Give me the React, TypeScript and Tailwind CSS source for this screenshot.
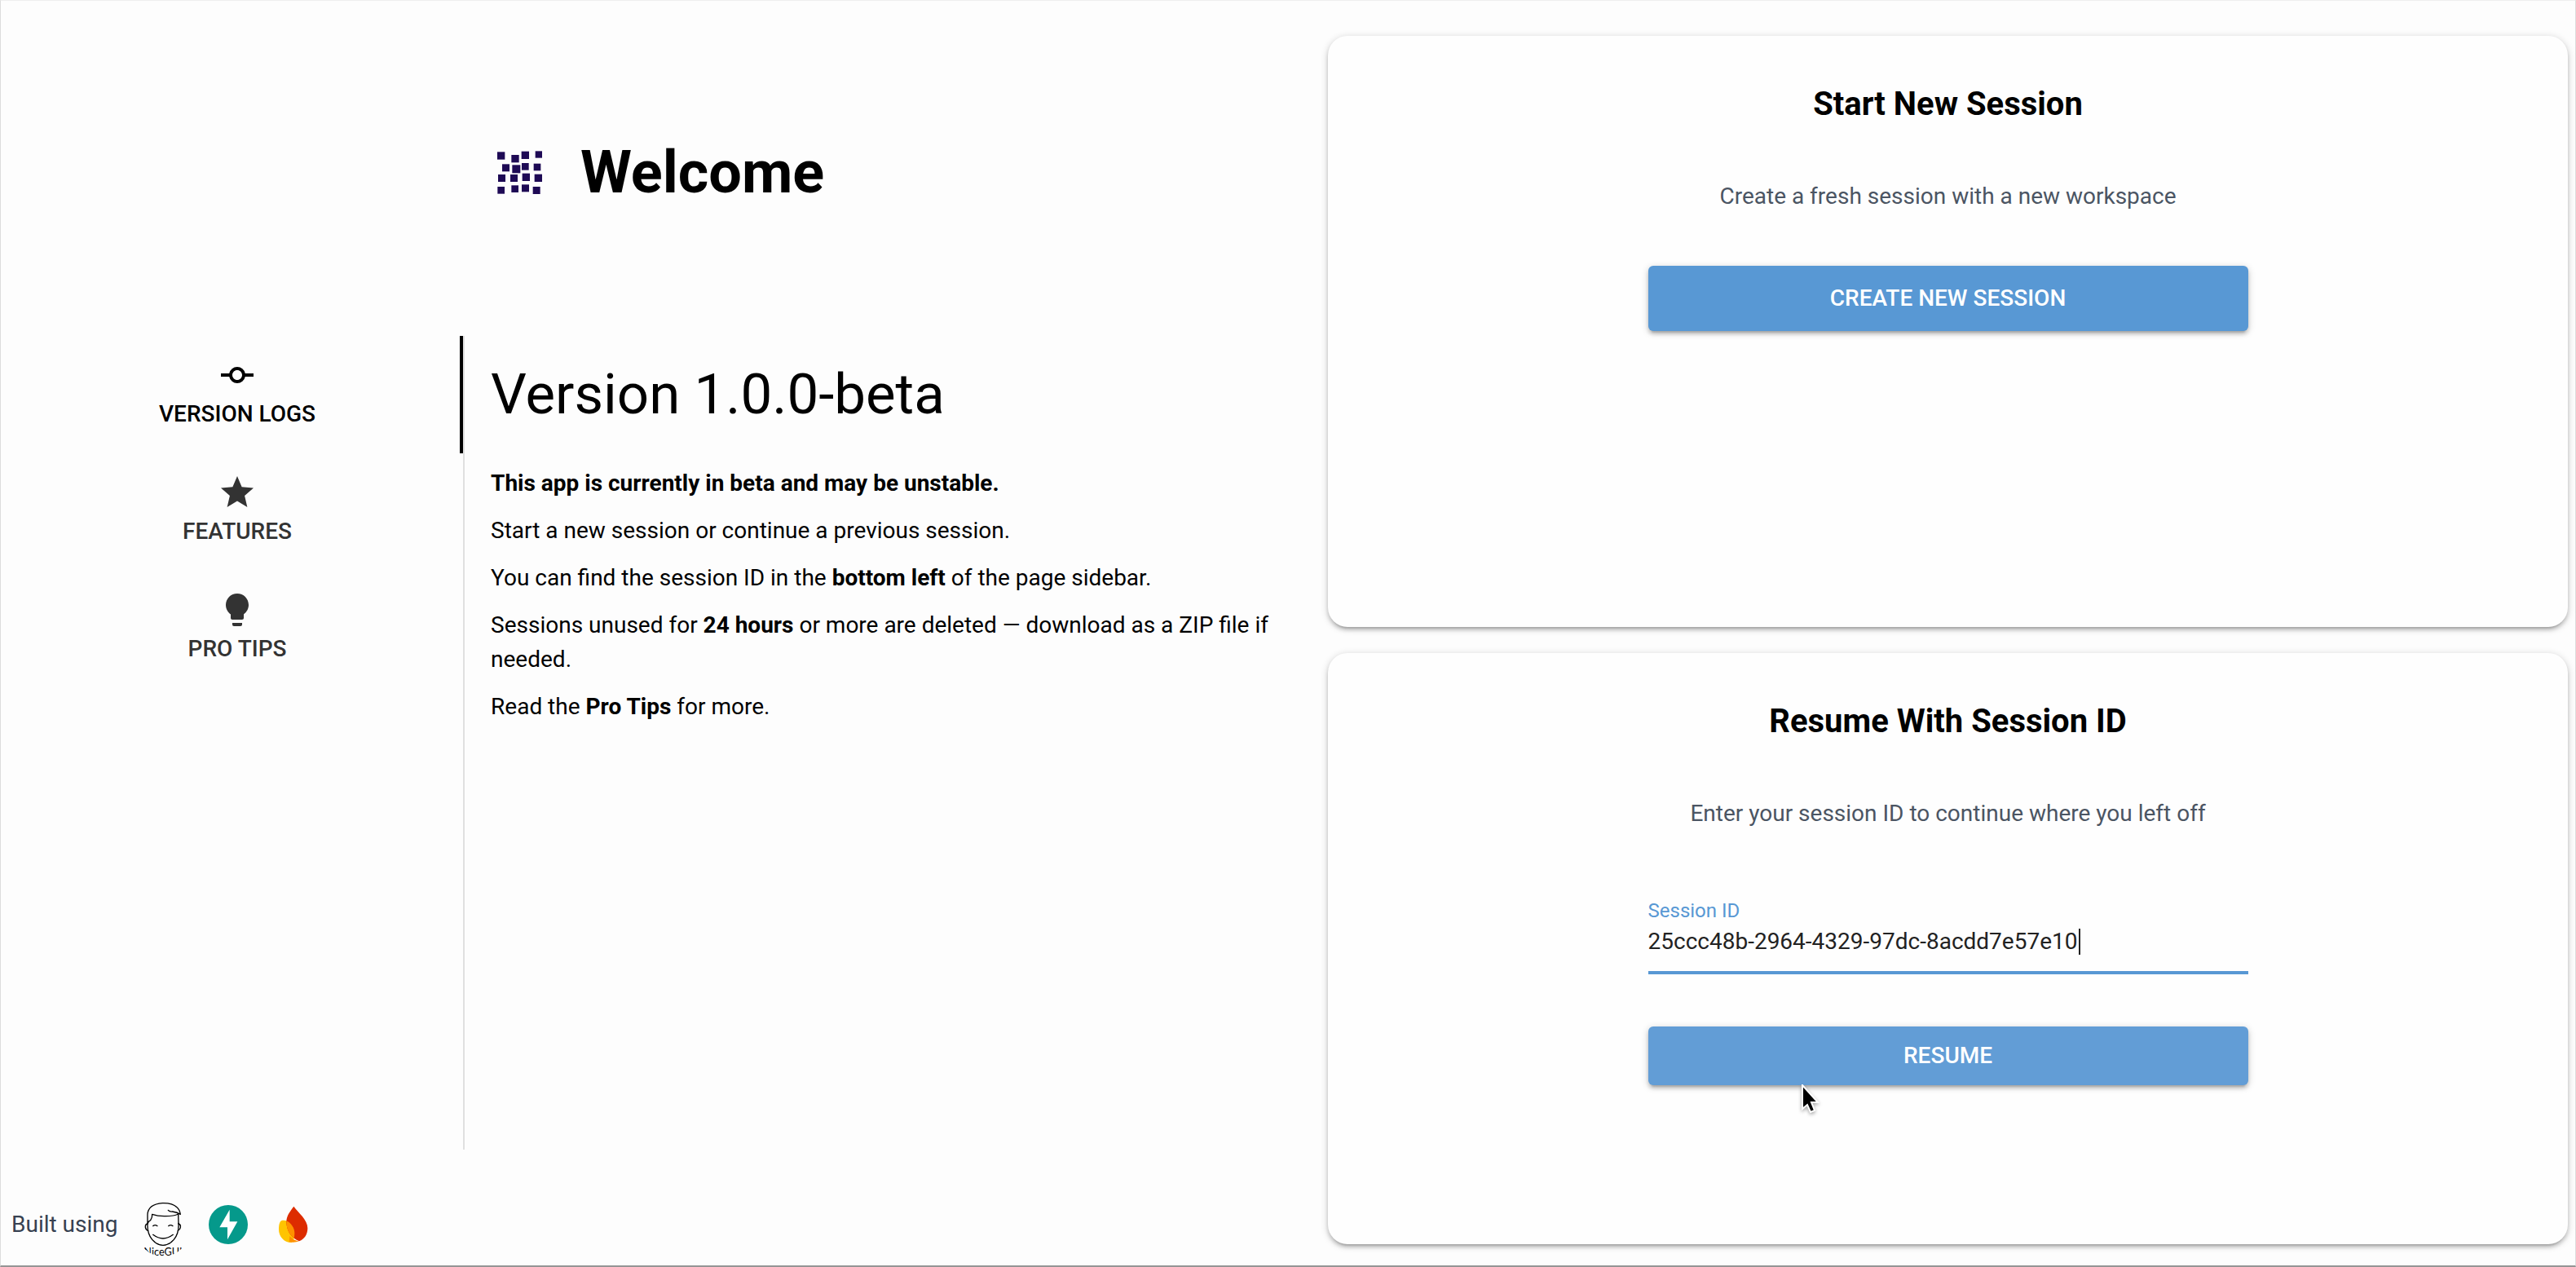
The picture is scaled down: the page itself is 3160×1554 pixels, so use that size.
import { useState, type ReactNode } from "react";
import { MdCommit, MdLightbulb, MdStar } from "react-icons/md";

const logoSquares = [
  [153, 139, 28], [205, 150, 28], [242, 137, 28], [293, 136, 25],
  [171, 184, 27], [208, 187, 30], [243, 180, 26], [287, 182, 26],
  [156, 222, 27], [201, 222, 27], [245, 218, 28], [290, 221, 28],
  [154, 267, 26], [205, 262, 26], [243, 259, 27], [284, 267, 27],
];

function Logo() {
  return (
    <svg viewBox="123 96 240 240" className="size-20 shrink-0" aria-hidden="true">
      {logoSquares.map(([x, y, s]) => (
        <rect key={`${x}-${y}`} x={x} y={y} width={s} height={s} fill="#1e0a55" />
      ))}
    </svg>
  );
}

function NiceGuiIcon() {
  return (
    <svg viewBox="504 87 192 192" className="size-16 overflow-visible" fill="none" stroke="#000" strokeWidth="4" strokeLinecap="round" strokeLinejoin="round" aria-hidden="true">
      <defs>
        <clipPath id="nice-clip">
          <circle cx="600" cy="203" r="97" />
        </clipPath>
      </defs>
      <path d="M543 180 V146 Q545 108 598 104 Q634 103 651 119 Q661 127 664 145 Q652 138 634 135 Q624 136 619 130 M543 180 Q546 170 554 167 Q561 157 560 145 Q582 153 610 152 Q640 152 656 144 L657 180" />
      <path d="M543 180 Q534 181 535 193 Q537 203 545 205 M657 180 Q666 182 664 194 Q662 203 655 205" />
      <path d="M543 178 Q541 215 560 238 Q578 259 600 259 Q623 258 640 238 Q659 215 657 178" />
      <path d="M563 188 Q571 182 579 188 M620 188 Q628 182 636 188 M563 220 Q600 248 637 220" />
      <g clipPath="url(#nice-clip)">
        <text x="600" y="297" textAnchor="middle" fill="#000" stroke="none" fontSize="38" fontFamily="Lato, sans-serif">NiceGUI</text>
      </g>
    </svg>
  );
}

function FastApiIcon() {
  return (
    <svg viewBox="744 87 192 192" className="size-16" aria-hidden="true">
      <circle cx="840" cy="183" r="72" fill="#05998b" />
      <path d="M845 128 L808 193 H837 V238 L874 172 H845 Z" fill="#fff" />
    </svg>
  );
}

const drop = "M1081 116 C1065 138 1055 150 1054 172 C1054 205 1070 232 1101 244 C1121 237 1132 218 1132 196 C1132 164 1098 140 1081 116 Z";
const blob = "M1040 167 C1062 165 1084 190 1084 214 C1084 228 1082 238 1074 249 C1045 250 1026 226 1026 200 C1026 180 1030 168 1040 167 Z";

function FlameIcon() {
  return (
    <svg viewBox="984 87 192 192" className="size-16" aria-hidden="true">
      <defs>
        <clipPath id="flame-drop">
          <path d={drop} />
        </clipPath>
      </defs>
      <path d={blob} fill="#ffc400" />
      <path d="M1066 225 Q1082 242 1101 244 Q1085 251 1064 247 Z" fill="#ff9100" />
      <path d={drop} fill="#dd2c00" />
      <path d={blob} fill="#ff9100" clipPath="url(#flame-drop)" />
    </svg>
  );
}

function Pointer() {
  return (
    <svg viewBox="0 0 24 38" className="pointer-events-none absolute top-[71px] left-[188px] h-[38px] w-6 drop-shadow-[0_2px_2px_rgba(0,0,0,0.35)]" aria-hidden="true">
      <path d="M1 1 V30 L7 25 L11 34 L16 32 L12 22 H20 Z" fill="#000" stroke="#fff" strokeWidth="2" />
    </svg>
  );
}

function Card({ title, subtitle, children }: { title: string; subtitle: string; children: ReactNode }) {
  return (
    <section className="flex flex-1 flex-col items-center rounded-[24px] bg-[#fefefe] px-8 pt-13 shadow-[0_2px_10px_rgba(0,0,0,0.2),0_4px_4px_rgba(0,0,0,0.14),0_6px_2px_-4px_rgba(0,0,0,0.12)]">
      <h2 className="text-[40px] leading-[64px] font-bold text-black">{title}</h2>
      <p className="mt-15 text-[28px] leading-[42px] text-[#4b5563]">{subtitle}</p>
      <div className="mt-16 w-full max-w-[736px]">{children}</div>
    </section>
  );
}

const buttonStyle =
  "rounded-[6px] text-[28px] font-medium text-white uppercase shadow-[0_2px_10px_rgba(0,0,0,0.2),0_4px_4px_rgba(0,0,0,0.14),0_6px_2px_-4px_rgba(0,0,0,0.12)]";

const tabs = [
  { label: "Version Logs", Icon: MdCommit },
  { label: "Features", Icon: MdStar },
  { label: "Pro Tips", Icon: MdLightbulb },
];

export default function App() {
  const [active, setActive] = useState(0);
  const [sessionId, setSessionId] = useState("25ccc48b-2964-4329-97dc-8acdd7e57e10");

  return (
    <div className="grid min-h-screen grid-cols-[51fr_49fr] gap-x-8 border-t border-r border-b-2 border-l border-t-[#efefef] border-r-[#dcdcdc] border-b-[#959595] border-l-[#dcdcdc] bg-[#fdfdfd] pr-[9px] pl-[13px] font-[Roboto,sans-serif] text-black">
      <main className="flex flex-col pb-[18px]">
        <header className="mt-[163px] mb-[152px] flex items-center justify-center gap-8">
          <Logo />
          <h1 className="text-[72px] leading-[96px] font-bold">Welcome</h1>
        </header>

        <div className="grid flex-1 grid-cols-[35fr_65fr]">
          <div role="tablist" aria-orientation="vertical" className="flex flex-col">
            {tabs.map(({ label, Icon }, i) => (
              <button
                key={label}
                type="button"
                role="tab"
                aria-selected={i === active}
                onClick={() => setActive(i)}
                className={`flex h-36 flex-col items-center justify-center border-r-4 pl-1 text-[28px] leading-[48px] font-medium uppercase ${
                  i === active ? "border-black text-black" : "border-transparent text-[#333]"
                }`}
              >
                <Icon className="size-12" aria-hidden="true" />
                {label}
              </button>
            ))}
          </div>
          <article role="tabpanel" className="border-l-2 border-[#e0e0e0] px-8 pt-8 text-[28px] leading-[42px]">
            <h2 className="mb-12 text-[69px] leading-[80px]">Version 1.0.0-beta</h2>
            <div className="flex flex-col gap-4">
              <p className="font-bold">This app is currently in beta and may be unstable.</p>
              <p>Start a new session or continue a previous session.</p>
              <p>
                You can find the session ID in the <strong>bottom left</strong> of the page sidebar.
              </p>
              <p>
                Sessions unused for <strong>24 hours</strong> or more are deleted — download as a ZIP file if needed.
              </p>
              <p>
                Read the <strong>Pro Tips</strong> for more.
              </p>
            </div>
          </article>
        </div>

        <footer className="mt-[60px] flex items-center gap-4">
          <span className="mr-2 text-[28px] leading-[42px] text-[#374151]">Built using</span>
          <a href="#nicegui" aria-label="NiceGUI"><NiceGuiIcon /></a>
          <a href="#fastapi" aria-label="FastAPI"><FastApiIcon /></a>
          <a href="#firebase" aria-label="Firebase"><FlameIcon /></a>
        </footer>
      </main>

      <div className="flex flex-col gap-8 pt-[43px] pb-[26px]">
        <Card title="Start New Session" subtitle="Create a fresh session with a new workspace">
          <button type="button" className={`h-20 w-full bg-[#5898d4] ${buttonStyle}`}>
            Create New Session
          </button>
        </Card>
        <Card title="Resume With Session ID" subtitle="Enter your session ID to continue where you left off">
          <div className="relative flex h-28 flex-col border-b-4 border-[#5898d4] pt-[18px]">
            <label htmlFor="session-id" className="text-[24px] leading-[32px] text-[#5898d4]">
              Session ID
            </label>
            <input
              id="session-id"
              type="text"
              value={sessionId}
              onChange={(e) => setSessionId(e.target.value)}
              className="h-11 w-full bg-transparent text-[28px] leading-[44px] text-[#222] caret-transparent outline-none"
            />
            <span className="absolute top-14 left-[528px] h-8 w-0.5 bg-[#222]" aria-hidden="true" />
          </div>
          <div className="relative mt-16">
            <button type="button" className={`h-[72px] w-full bg-[#629dd6] ${buttonStyle}`}>
              Resume
            </button>
            <Pointer />
          </div>
        </Card>
      </div>
    </div>
  );
}
